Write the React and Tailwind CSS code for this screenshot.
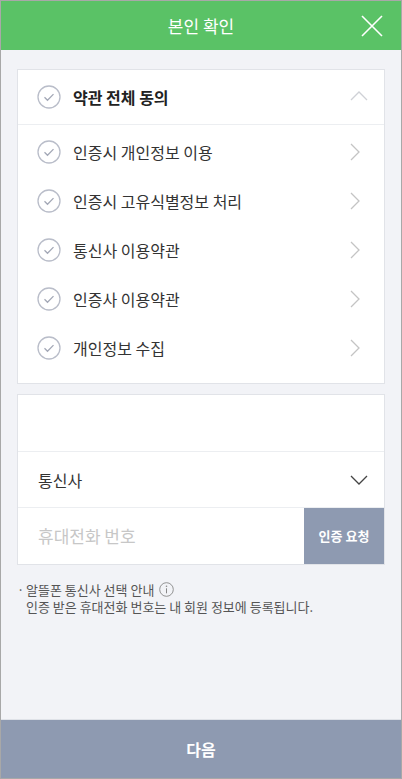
import React from 'react';

const terms = [
  '인증시 개인정보 이용',
  '인증시 고유식별정보 처리',
  '통신사 이용약관',
  '인증사 이용약관',
  '개인정보 수집',
];

const CheckCircle = () => (
  <svg width="24" height="24" viewBox="0 0 24 24" className="shrink-0">
    <circle cx="12" cy="12" r="11" fill="none" stroke="#b9bdc9" strokeWidth="1.3" />
    <path d="M7.5 12.3l3 3 6-6.2" fill="none" stroke="#a3a8b6" strokeWidth="1.3" />
  </svg>
);

const Chevron = ({ dir = 'right', color = '#c4c4c4' }) => {
  const d = {
    right: 'M4 1l8 8-8 8',
    up: 'M1 12l8-8 8 8',
    down: 'M1 5l8 8 8-8',
  }[dir];
  return (
    <svg width="18" height="18" viewBox="0 0 18 18" className="shrink-0">
      <path d={d} fill="none" stroke={color} strokeWidth="1.3" />
    </svg>
  );
};

export default function App() {
  return (
    <div
      className="w-[402px] h-[779px] flex flex-col border border-[#a8a8a8] bg-[#f2f3f7] overflow-hidden"
      style={{ fontFamily: '"Noto Sans CJK KR", "Noto Sans", sans-serif' }}
    >
      {/* 헤더 */}
      <div className="h-[49px] bg-[#5ac266] flex items-center justify-center relative shrink-0">
        <h1 className="text-white text-[17px] leading-none">본인 확인</h1>
        <button className="absolute right-[18px] top-[14px]">
          <svg width="22" height="22" viewBox="0 0 22 22">
            <path d="M1 1l20 20M21 1L1 21" stroke="#ffffff" strokeWidth="1.6" />
          </svg>
        </button>
      </div>

      <div className="flex-1 flex flex-col px-[16px] pt-[19px]">
        {/* 약관 동의 */}
        <div className="bg-white border border-[#e1e3e8]">
          <div className="h-[55px] flex items-center pl-[19px] pr-[16px] border-b border-[#eceef1]">
            <CheckCircle />
            <span className="ml-[12px] flex-1 text-[16px] font-bold text-[#222]">약관 전체 동의</span>
            <Chevron dir="up" color="#cfd1d6" />
          </div>
          <div className="pt-[2px] pb-[11px]">
            {terms.map((t) => (
              <div key={t} className="h-[49px] flex items-center pl-[19px] pr-[19px]">
                <CheckCircle />
                <span className="ml-[12px] flex-1 text-[16px] text-[#333]">{t}</span>
                <Chevron dir="right" />
              </div>
            ))}
          </div>
        </div>

        {/* 휴대전화 인증 */}
        <div className="mt-[10px] bg-white border border-[#e1e3e8]">
          <div className="h-[57px] border-b border-[#eceef1]" />
          <div className="h-[56px] flex items-center pl-[20px] pr-[16px] border-b border-[#eceef1]">
            <span className="flex-1 text-[16px] text-[#333]">통신사</span>
            <Chevron dir="down" color="#444" />
          </div>
          <div className="h-[56px] flex">
            <input
              placeholder="휴대전화 번호"
              className="flex-1 min-w-0 pl-[20px] text-[17px] text-[#333] placeholder:text-[#c7c7c7] outline-none"
            />
            <button className="w-[80px] bg-[#8e9ab1] text-white text-[13px] font-bold">인증 요청</button>
          </div>
        </div>

        {/* 안내 */}
        <div className="mt-[16px] text-[13px] leading-[17px] text-[#555]">
          <div className="flex items-center">
            <span className="w-[9px]">·</span>
            <span>알뜰폰 통신사 선택 안내</span>
            <svg width="15" height="15" viewBox="0 0 15 15" className="ml-[5px]">
              <circle cx="7.5" cy="7.5" r="6.8" fill="none" stroke="#888" strokeWidth="0.9" />
              <circle cx="7.5" cy="4.3" r="0.8" fill="#888" />
              <path d="M7.5 6.3v5" stroke="#888" strokeWidth="1" />
            </svg>
          </div>
          <p className="pl-[9px]">인증 받은 휴대전화 번호는 내 회원 정보에 등록됩니다.</p>
        </div>
      </div>

      {/* 다음 */}
      <button className="h-[59px] shrink-0 bg-[#8e9ab1] border-t border-[#dfe2e8] text-white text-[16px] font-bold">
        다음
      </button>
    </div>
  );
}
